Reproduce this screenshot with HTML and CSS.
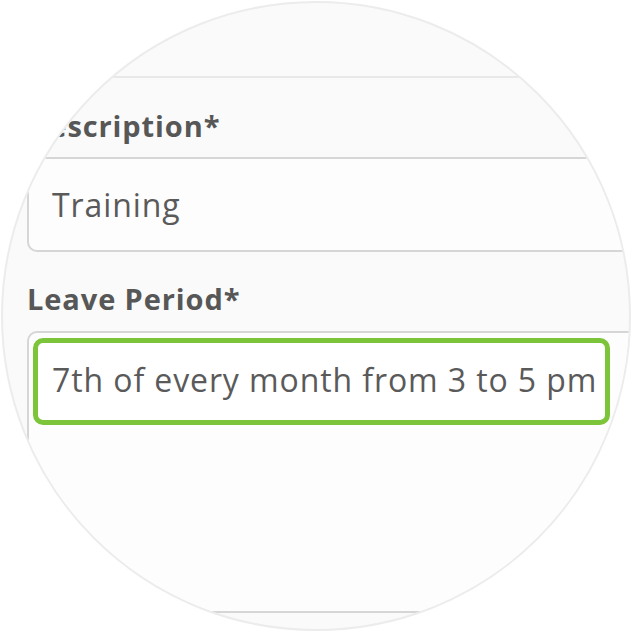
FILE: index.html
```html
<!DOCTYPE html>
<html>
<head>
<meta charset="utf-8">
<link rel="stylesheet" href="styles.css">
</head>
<body>
<div class="page">
  <div class="lens">
    <div class="topline"></div>
    <div class="form">
      <div class="label label-desc">Description*</div>
      <div class="field field-desc">Training</div>
      <div class="label label-period">Leave Period*</div>
      <div class="field field-period">
        <div class="highlight">7th of every month from 3 to 5 pm</div>
      </div>
    </div>
  </div>
</div>
</body>
</html>
```
FILE: styles.css
```css
html, body {
  margin: 0;
  padding: 0;
  background: #ffffff;
}
.page {
  width: 632px;
  height: 632px;
  background: #ffffff;
  overflow: hidden;
}
.lens {
  margin: 1px;
  width: 630px;
  height: 630px;
  box-sizing: border-box;
  border: 2px solid #ececec;
  border-radius: 50%;
  overflow: hidden;
  background: #fafafa;
  font-family: "Open Sans", "Noto Sans", sans-serif;
}
.topline {
  height: 73px;
  border-bottom: 2px solid #e8e8e8;
}
.form {
  padding-left: 24px;
}
.label {
  font-size: 29px;
  line-height: 40px;
  font-weight: 700;
  letter-spacing: 0.9px;
  color: #575757;
  white-space: nowrap;
}
.label-desc {
  margin-top: 28px;
}
.label-period {
  margin-top: 27px;
}
.field {
  border: 2px solid #d6d6d6;
  border-radius: 10px;
  background: #fdfdfd;
  margin-right: -60px;
  color: #5a5a5a;
  font-size: 32px;
  letter-spacing: 0.9px;
  white-space: nowrap;
}
.field-desc {
  margin-top: 11px;
  height: 91px;
  line-height: 91px;
  padding-left: 23px;
}
.field-period {
  margin-top: 12px;
  padding: 5px 0 0 4px;
  box-sizing: border-box;
  height: 282px;
}
.highlight {
  width: 553px;
  height: 73px;
  line-height: 73px;
  padding: 0 0 4px 14px;
  border: 5px solid #7cc43a;
  border-radius: 10px;
  background: #ffffff;
}
```
